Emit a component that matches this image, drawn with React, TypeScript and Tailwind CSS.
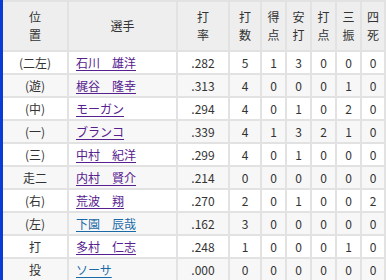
import React from "react";

type Row = {
  pos: string;
  name: string;
  visited: boolean;
  stats: string[];
};

const rows: Row[] = [
  { pos: "(二左)", name: "石川　雄洋", visited: true, stats: [".282", "5", "1", "3", "0", "0", "0"] },
  { pos: "(遊)", name: "梶谷　隆幸", visited: true, stats: [".313", "4", "0", "0", "0", "1", "0"] },
  { pos: "(中)", name: "モーガン", visited: true, stats: [".294", "4", "0", "1", "0", "2", "0"] },
  { pos: "(一)", name: "ブランコ", visited: true, stats: [".339", "4", "1", "3", "2", "1", "0"] },
  { pos: "(三)", name: "中村　紀洋", visited: true, stats: [".299", "4", "0", "1", "0", "0", "0"] },
  { pos: "走二", name: "内村　賢介", visited: true, stats: [".214", "0", "0", "0", "0", "0", "0"] },
  { pos: "(右)", name: "荒波　翔", visited: true, stats: [".270", "2", "0", "1", "0", "0", "2"] },
  { pos: "(左)", name: "下園　辰哉", visited: false, stats: [".162", "3", "0", "0", "0", "0", "0"] },
  { pos: "打", name: "多村　仁志", visited: true, stats: [".248", "1", "0", "0", "0", "1", "0"] },
  { pos: "投", name: "ソーサ", visited: false, stats: [".000", "0", "0", "0", "0", "0", "0"] },
];

const headers: [string, string][] = [
  ["打", "率"],
  ["打", "数"],
  ["得", "点"],
  ["安", "打"],
  ["打", "点"],
  ["三", "振"],
  ["四", "死"],
];

export default function App() {
  return (
    <div
      className="w-[386px] h-[280px] overflow-hidden bg-white text-[#333] text-[12px]"
      style={{ fontFamily: '"Noto Sans CJK JP", "Noto Sans", sans-serif' }}
    >
      <div className="border-l-[3px] border-[#0a3bd2] bg-[#e2e2e2] pt-[2px] pr-[2px]">
        <div className="grid grid-cols-[64px_107px_50px_30px_23px_23px_23px_23px_22px] gap-[2px]">
          <div className="h-[48px] bg-[#eeeeee] flex flex-col items-center justify-center leading-[18px]">
            <span>位</span>
            <span>置</span>
          </div>
          <div className="h-[48px] bg-[#eeeeee] flex items-center justify-center leading-[18px]">
            選手
          </div>
          {headers.map(([a, b], i) => (
            <div
              key={i}
              className="h-[48px] bg-[#eeeeee] flex flex-col items-center justify-center leading-[18px]"
            >
              <span>{a}</span>
              <span>{b}</span>
            </div>
          ))}
          {rows.map((r, ri) => {
            const bg = ri % 2 === 0 ? "bg-white" : "bg-[#f7f7f7]";
            return (
              <React.Fragment key={ri}>
                <div className={`h-[21px] ${bg} flex items-center justify-center`}>{r.pos}</div>
                <div className={`h-[21px] ${bg} flex items-center pl-[7px]`}>
                  <a
                    href="#"
                    className={`underline underline-offset-2 ${
                      r.visited ? "text-[#56208f]" : "text-[#1a6aa8]"
                    }`}
                  >
                    {r.name}
                  </a>
                </div>
                {r.stats.map((s, si) => (
                  <div key={si} className={`h-[21px] ${bg} flex items-center justify-center`}>
                    {s}
                  </div>
                ))}
              </React.Fragment>
            );
          })}
        </div>
      </div>
    </div>
  );
}
